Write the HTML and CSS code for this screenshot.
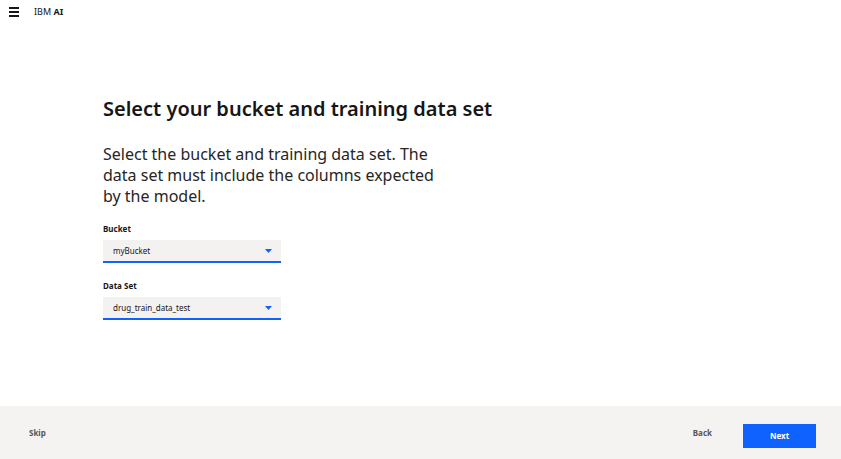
FILE: index.html
```html
<!DOCTYPE html>
<html>
<head>
<meta charset="utf-8">
<link rel="stylesheet" href="styles.css">
</head>
<body>
<div class="page">
  <header class="topbar">
    <svg class="menu" width="10" height="10" viewBox="0 0 10 10"><rect x="0" y="0" width="10" height="2" fill="#161616"/><rect x="0" y="4" width="10" height="2" fill="#161616"/><rect x="0" y="8" width="10" height="2" fill="#161616"/></svg>
    <span class="brand">IBM <b>AI</b></span>
  </header>
  <main class="content">
    <h1 class="title">Select your bucket and training data set</h1>
    <p class="lead">Select the bucket and training data set. The data set must include the columns expected by the model.</p>
    <div class="field">
      <label class="label">Bucket</label>
      <div class="select"><span>myBucket</span><svg width="7" height="4" viewBox="0 0 7 4"><path d="M0 0h7L3.5 4z" fill="#0f62fe"/></svg></div>
    </div>
    <div class="field">
      <label class="label">Data Set</label>
      <div class="select"><span>drug_train_data_test</span><svg width="7" height="4" viewBox="0 0 7 4"><path d="M0 0h7L3.5 4z" fill="#0f62fe"/></svg></div>
    </div>
  </main>
  <footer class="footer">
    <span class="skip">Skip</span>
    <div class="actions">
      <span class="back">Back</span>
      <button class="next">Next</button>
    </div>
  </footer>
</div>
</body>
</html>
```
FILE: styles.css
```css
* { box-sizing: border-box; }
html, body { margin: 0; padding: 0; }
body {
  width: 841px;
  height: 459px;
  background: #fff;
  font-family: "Noto Sans", "Open Sans", sans-serif;
  color: #161616;
  overflow: hidden;
}
.page {
  display: flex;
  flex-direction: column;
  height: 459px;
}
.topbar {
  display: flex;
  align-items: center;
  height: 23px;
  padding: 0 0 0 9px;
  gap: 15px;
}
.brand {
  font-size: 9px;
  color: #161616;
}
.brand b { font-weight: 700; }
.content {
  flex: 1;
  padding: 73px 0 0 103px;
}
.title {
  margin: 0;
  font-size: 20px;
  font-weight: 600;
  line-height: 26px;
  letter-spacing: 0;
}
.lead {
  margin: 22px 0 0 0;
  width: 340px;
  font-size: 16px;
  line-height: 21px;
  font-weight: 400;
  color: #262626;
}
.field {
  display: flex;
  flex-direction: column;
  margin-top: 17px;
}
.field + .field { margin-top: 18px; }
.label {
  font-size: 8px;
  font-weight: 700;
  line-height: 10px;
  margin-bottom: 6px;
  color: #161616;
}
.select {
  width: 178px;
  height: 23px;
  background: #f3f2f1;
  border-bottom: 2px solid #0f62fe;
  display: flex;
  align-items: center;
  justify-content: space-between;
  padding: 0 9px 0 10px;
  font-size: 8px;
  color: #161616;
}
.footer {
  height: 53px;
  background: #f4f3f2;
  display: flex;
  align-items: center;
  justify-content: space-between;
  padding: 0 25px 0 29px;
}
.skip, .back {
  font-size: 8px;
  font-weight: 700;
  color: #565656;
}
.actions {
  display: flex;
  align-items: center;
  gap: 31px;
}
.next {
  width: 73px;
  height: 24px;
  border: none;
  background: #0f62fe;
  color: #fff;
  font-family: inherit;
  font-size: 8px;
  font-weight: 700;
  margin-top: 6px;
}
```
